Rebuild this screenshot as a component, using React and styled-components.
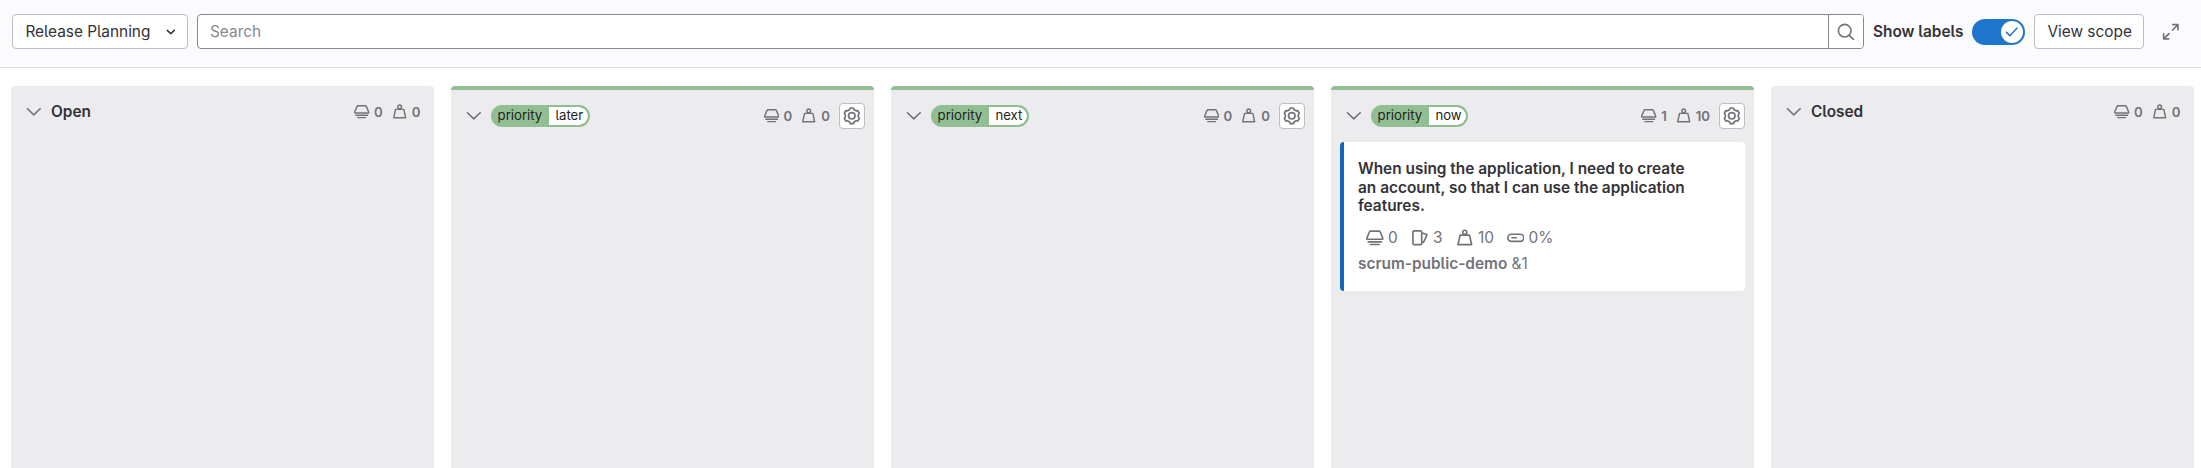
import React from "react";
import styled, { createGlobalStyle } from "styled-components";

const Global = createGlobalStyle`
  *, *::before, *::after { box-sizing: border-box; }
  html, body, #root { height: 100%; }
  body {
    margin: 0;
    background: #fff;
    color: #333238;
    font-family: Inter, "Noto Sans", sans-serif;
    font-feature-settings: "cv05" 1;
    font-size: 15.4px;
    line-height: 20px;
    overflow: hidden;
  }
  button, input { font: inherit; font-feature-settings: inherit; letter-spacing: inherit; color: inherit; margin: 0; }
  h2, h3, p { margin: 0; font: inherit; }
`;

const Page = styled.div`
  display: flex;
  flex-direction: column;
  height: 100%;
`;

const Toolbar = styled.header`
  flex: none;
  display: flex;
  align-items: flex-start;
  height: 68px;
  padding: 14px 11px 0 12px;
  background: #fbfafd;
  border-bottom: 1px solid #dcdcde;
`;

const Button = styled.button`
  flex: none;
  display: flex;
  align-items: center;
  justify-content: space-between;
  width: ${(p) => p.$width}px;
  height: 35px;
  padding: 0 7px 0 12.4px;
  border: 1px solid #bfbfc3;
  border-radius: 4px;
  background: #fff;
  white-space: nowrap;
`;

const SearchGroup = styled.div`
  display: flex;
  flex: none;
  width: 1667px;
  height: 35px;
  margin: 0 9px;
  border: 1px solid #89888d;
  border-radius: 4px;
  background: #fff;
  overflow: hidden;
`;

const SearchInput = styled.input`
  flex: 1;
  min-width: 0;
  padding: 0 12px;
  border: 0;
  outline: 0;
  background: transparent;
  &::placeholder { color: #89888d; opacity: 1; }
`;

const SearchButton = styled.button`
  display: flex;
  align-items: center;
  justify-content: center;
  width: 35px;
  padding: 0;
  border: 0;
  border-left: 1px solid #89888d;
  background: #fff;
  color: #737278;
`;

const ToggleLabel = styled.span`
  width: 99px;
  line-height: 35px;
  font-weight: 600;
  white-space: nowrap;
`;

const Toggle = styled.span`
  display: flex;
  justify-content: flex-end;
  width: 53px;
  height: 26px;
  margin: 5px 9px 0 0;
  padding: 2px;
  border-radius: 13px;
  background: #1f75cb;
`;

const Knob = styled.span`
  display: flex;
  align-items: center;
  justify-content: center;
  width: 22px;
  height: 22px;
  border-radius: 50%;
  background: #fff;
  color: #1f75cb;
`;

const IconButton = styled.button`
  display: flex;
  align-items: center;
  justify-content: center;
  width: 35px;
  height: 35px;
  margin-left: 9px;
  padding: 0;
  border: 0;
  background: transparent;
  color: #737278;
`;

const Board = styled.main`
  flex: 1;
  min-height: 0;
  display: flex;
  gap: 17px;
  padding: 18px 0 0 11px;
`;

const List = styled.section`
  flex: none;
  width: 423px;
  border-radius: 4px 4px 0 0;
  background: #ececef;
  ${(p) => p.$color && `border-top: 4px solid ${p.$color};`}
`;

const ListHeader = styled.div`
  display: flex;
  align-items: center;
  height: 52px;
  padding: 0 ${(p) => (p.$labelled ? 9 : 13.5)}px 0 14px;
  color: #737278;
`;

const ListTitle = styled.h2`
  margin-left: 8.4px;
  color: #333238;
  font-weight: 600;
`;

const Label = styled.span`
  display: flex;
  height: 22px;
  margin-left: 8.4px;
  border: 2px solid #91be92;
  border-left: 0;
  border-radius: 11px;
  background: #91be92;
  color: #1f1e24;
  font-size: 13.2px;
  line-height: 17px;
  overflow: hidden;
`;

const LabelScope = styled.span`
  width: 58px;
  padding-left: 6.6px;
`;

const LabelValue = styled.span`
  padding: 0 5px 0 6.4px;
  width: ${(p) => p.$width}px;
  border-radius: 0 9px 9px 0;
  background: #fff;
`;

const Stats = styled.div`
  display: flex;
  align-items: center;
  margin-left: auto;
  font-size: 13.2px;
  font-weight: 600;
`;

const Stat = styled.span`
  display: flex;
  align-items: center;
  gap: 4.6px;
  & + & { margin-left: 9px; }
`;

const Gear = styled.button`
  display: flex;
  align-items: center;
  justify-content: center;
  width: 26px;
  height: 26px;
  margin-left: 9px;
  padding: 0;
  border: 1px solid #bfbfc3;
  border-radius: 4px;
  background: #fff;
  color: #737278;
`;

const Card = styled.article`
  width: 405px;
  height: 149px;
  margin: 0 9px;
  padding: 18px 14px;
  border-left: 4px solid #1068bf;
  border-radius: 4px;
  background: #fff;
  color: #737278;
`;

const CardTitle = styled.h3`
  color: #333238;
  font-weight: 600;
  line-height: 18.5px;
  white-space: nowrap;
`;

const CardStats = styled.div`
  display: flex;
  align-items: center;
  height: 22px;
  margin-top: 11px;
  padding-left: 8px;
`;

const CardStat = styled.span`
  display: flex;
  align-items: center;
  gap: 4.4px;
  width: ${(p) => p.$width}px;
`;

const CardRef = styled.p`
  margin-top: 5px;
  line-height: 20px;
  b { font-weight: 600; }
`;

const Svg = styled.svg`
  flex: none;
  display: block;
  fill: none;
  stroke: currentColor;
  stroke-width: 1.5;
`;

const Icon = ({ size = 17.6, children }) => (
  <Svg width={size} height={size} viewBox="0 0 16 16">{children}</Svg>
);

const ChevronSmall = () => (
  <Icon><path d="M4.85 6.75 8 9.8l3.15-3.05" strokeLinecap="round" strokeLinejoin="round" strokeWidth="1.4" /></Icon>
);
const Chevron = () => (
  <Icon><path d="M2.2 5.25 8 10.75l5.8-5.5" strokeLinecap="round" strokeLinejoin="round" /></Icon>
);
const SearchIcon = () => (
  <Icon><circle cx="7" cy="7" r="5.75" /><path d="M11.2 11.2 15 15" strokeLinecap="round" /></Icon>
);
const Check = () => (
  <Icon><path d="M3.2 8.5 6.3 11.5 12.8 4.6" strokeLinecap="round" strokeLinejoin="round" strokeWidth="1.35" /></Icon>
);
const Expand = () => (
  <Icon>
    <path d="M9.9 1.5h4.6v4.6M14.2 1.8 9.6 6.4M1.5 9.9v4.6h4.6M1.8 14.2l4.6-4.6" strokeLinecap="round" strokeLinejoin="round" />
  </Icon>
);
const Epic = ({ size }) => (
  <Icon size={size}>
    <path d="M4.1 1.9h7.8a1 1 0 0 1 .9.6L15.2 8.1v1.2H.8V8.1L3.2 2.5a1 1 0 0 1 .9-.6z" strokeLinejoin="round" />
    <path d="M1.9 11.7h12.2M3.9 14.1h8.2" strokeWidth="1.4" strokeLinecap="round" />
  </Icon>
);
const Weight = ({ size }) => (
  <Icon size={size}>
    <circle cx="8" cy="3" r="1.9" />
    <path d="M3.7 5.6h8.6l1.9 8.65H1.8z" strokeLinejoin="round" />
  </Icon>
);
const Issues = ({ size }) => (
  <Icon size={size}>
    <rect x="1.75" y="1.75" width="8" height="12.5" rx="1" />
    <path d="M10.1 3.7l3.7 1.1c.6.2.8.6.6 1.1l-3.1 6.2h-1.2" strokeLinejoin="round" />
  </Icon>
);
const Progress = ({ size }) => (
  <Icon size={size}>
    <rect x=".75" y="4.75" width="14.5" height="6.5" rx="3.25" />
    <path d="M4.5 8h4" strokeLinecap="round" />
  </Icon>
);
const Cog = () => (
  <Icon>
    <path
      d="M6.63.93h2.74l.58 1.4 1.99 1.14 1.49-.19 1.38 2.38-.92 1.2v2.28l.92 1.2-1.38 2.38-1.49-.19-1.99 1.14-.58 1.4H6.63l-.58-1.4-1.99-1.14-1.49.19-1.38-2.38.92-1.2V6.86l-.92-1.2 1.38-2.38 1.49.19 1.99-1.14z"
      strokeLinejoin="round"
    />
    <circle cx="8" cy="8" r="2.95" />
  </Icon>
);

const lists = [
  { title: "Open", epics: 0, weight: 0 },
  { label: "later", labelWidth: 39, epics: 0, weight: 0 },
  { label: "next", labelWidth: 38, epics: 0, weight: 0 },
  { label: "now", labelWidth: 37, epics: 1, weight: 10, card: true },
  { title: "Closed", epics: 0, weight: 0 },
];

const EpicCard = () => (
  <Card>
    <CardTitle>
      When using the application, I need to create<br />
      an account, so that I can use the application<br />
      features.
    </CardTitle>
    <CardStats>
      <CardStat $width={45}><Epic />0</CardStat>
      <CardStat $width={45}><Issues />3</CardStat>
      <CardStat $width={50.6}><Weight />10</CardStat>
      <CardStat><Progress />0%</CardStat>
    </CardStats>
    <CardRef><b>scrum-public-demo</b> &amp;1</CardRef>
  </Card>
);

const BoardList = ({ list }) => (
  <List $color={list.label && "#91be92"}>
    <ListHeader $labelled={!!list.label}>
      <Chevron />
      {list.title ? (
        <ListTitle>{list.title}</ListTitle>
      ) : (
        <Label>
          <LabelScope>priority</LabelScope>
          <LabelValue $width={list.labelWidth}>{list.label}</LabelValue>
        </Label>
      )}
      <Stats>
        <Stat><Epic size={15.4} />{list.epics}</Stat>
        <Stat><Weight size={15.4} />{list.weight}</Stat>
        {list.label && <Gear aria-label="List settings"><Cog /></Gear>}
      </Stats>
    </ListHeader>
    {list.card && <EpicCard />}
  </List>
);

export default function App() {
  return (
    <Page>
      <Global />
      <Toolbar>
        <Button $width={176}>Release Planning<ChevronSmall /></Button>
        <SearchGroup>
          <SearchInput placeholder="Search" />
          <SearchButton aria-label="Search"><SearchIcon /></SearchButton>
        </SearchGroup>
        <ToggleLabel>Show labels</ToggleLabel>
        <Toggle><Knob><Check /></Knob></Toggle>
        <Button $width={110}>View scope</Button>
        <IconButton aria-label="Expand"><Expand /></IconButton>
      </Toolbar>
      <Board>
        {lists.map((list, i) => <BoardList key={i} list={list} />)}
      </Board>
    </Page>
  );
}
